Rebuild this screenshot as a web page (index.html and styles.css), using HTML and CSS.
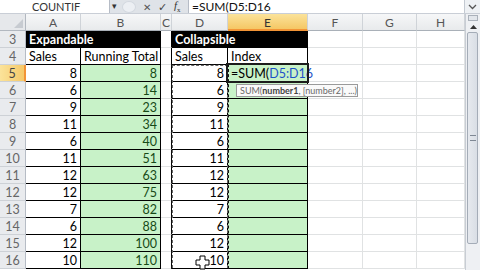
FILE: index.html
```html
<!DOCTYPE html>
<html>
    <head>
        <title>Running Total</title>
        <link rel="stylesheet" href="styles.css">
    </head>
    <body>
        <div class="excel">
            <div class="fbar">
                <div class="namebox">COUNTIF</div>
                <span class="nb-arrow">&#9662;</span>
                <div class="fbtns">
                    <span class="grip"></span>
                    <span class="fb-x">&#10005;</span>
                    <span class="fb-ok">&#10003;</span>
                    <span class="fb-fx"><i>f</i><sub>x</sub></span>
                </div>
                <div class="finput">=SUM(D5:D16</div>
                <div class="fexpand">
                    <svg width="9" height="6" viewBox="0 0 9 6"><path d="M1 1l3.5 3.5L8 1" fill="none" stroke="#555" stroke-width="1.3"/></svg>
                </div>
            </div>

            <div class="main">
                <div class="sheet">
                    <div class="grid">
                        <!-- column headers -->
                        <div class="corner"><span class="tri"></span></div>
                        <div class="ch">A</div>
                        <div class="ch">B</div>
                        <div class="ch">C</div>
                        <div class="ch">D</div>
                        <div class="ch sel">E</div>
                        <div class="ch">F</div>
                        <div class="ch">G</div>
                        <div class="ch">H</div>

                        <!-- row 3 -->
                        <div class="rh">3</div>
                        <div class="c hd span2">Expandable</div>
                        <div class="c cc"></div>
                        <div class="c hd span2">Collapsible</div>
                        <div class="c"></div><div class="c"></div><div class="c"></div>

                        <!-- row 4 -->
                        <div class="rh">4</div>
                        <div class="c t">Sales</div>
                        <div class="c t">Running Total</div>
                        <div class="c cc"></div>
                        <div class="c t">Sales</div>
                        <div class="c t">Index</div>
                        <div class="c"></div><div class="c"></div><div class="c"></div>

                        <!-- row 5 -->
                        <div class="rh sel">5</div>
                        <div class="c t n">8</div>
                        <div class="c t n g">8</div>
                        <div class="c cc"></div>
                        <div class="c t n">8</div>
                        <div class="c t g edit">=SUM(<span class="ref">D5:D16</span></div>
                        <div class="c"></div><div class="c"></div><div class="c"></div>

                        <!-- row 6 -->
                        <div class="rh">6</div>
                        <div class="c t n">6</div>
                        <div class="c t n g">14</div>
                        <div class="c cc"></div>
                        <div class="c t n">6</div>
                        <div class="c t g"></div>
                        <div class="c"></div><div class="c"></div><div class="c"></div>

                        <!-- row 7 -->
                        <div class="rh">7</div>
                        <div class="c t n">9</div>
                        <div class="c t n g">23</div>
                        <div class="c cc"></div>
                        <div class="c t n">9</div>
                        <div class="c t g"></div>
                        <div class="c"></div><div class="c"></div><div class="c"></div>

                        <!-- row 8 -->
                        <div class="rh">8</div>
                        <div class="c t n">11</div>
                        <div class="c t n g">34</div>
                        <div class="c cc"></div>
                        <div class="c t n">11</div>
                        <div class="c t g"></div>
                        <div class="c"></div><div class="c"></div><div class="c"></div>

                        <!-- row 9 -->
                        <div class="rh">9</div>
                        <div class="c t n">6</div>
                        <div class="c t n g">40</div>
                        <div class="c cc"></div>
                        <div class="c t n">6</div>
                        <div class="c t g"></div>
                        <div class="c"></div><div class="c"></div><div class="c"></div>

                        <!-- row 10 -->
                        <div class="rh">10</div>
                        <div class="c t n">11</div>
                        <div class="c t n g">51</div>
                        <div class="c cc"></div>
                        <div class="c t n">11</div>
                        <div class="c t g"></div>
                        <div class="c"></div><div class="c"></div><div class="c"></div>

                        <!-- row 11 -->
                        <div class="rh">11</div>
                        <div class="c t n">12</div>
                        <div class="c t n g">63</div>
                        <div class="c cc"></div>
                        <div class="c t n">12</div>
                        <div class="c t g"></div>
                        <div class="c"></div><div class="c"></div><div class="c"></div>

                        <!-- row 12 -->
                        <div class="rh">12</div>
                        <div class="c t n">12</div>
                        <div class="c t n g">75</div>
                        <div class="c cc"></div>
                        <div class="c t n">12</div>
                        <div class="c t g"></div>
                        <div class="c"></div><div class="c"></div><div class="c"></div>

                        <!-- row 13 -->
                        <div class="rh">13</div>
                        <div class="c t n">7</div>
                        <div class="c t n g">82</div>
                        <div class="c cc"></div>
                        <div class="c t n">7</div>
                        <div class="c t g"></div>
                        <div class="c"></div><div class="c"></div><div class="c"></div>

                        <!-- row 14 -->
                        <div class="rh">14</div>
                        <div class="c t n">6</div>
                        <div class="c t n g">88</div>
                        <div class="c cc"></div>
                        <div class="c t n">6</div>
                        <div class="c t g"></div>
                        <div class="c"></div><div class="c"></div><div class="c"></div>

                        <!-- row 15 -->
                        <div class="rh">15</div>
                        <div class="c t n">12</div>
                        <div class="c t n g">100</div>
                        <div class="c cc"></div>
                        <div class="c t n">12</div>
                        <div class="c t g"></div>
                        <div class="c"></div><div class="c"></div><div class="c"></div>

                        <!-- row 16 -->
                        <div class="rh">16</div>
                        <div class="c t n">10</div>
                        <div class="c t n g">110</div>
                        <div class="c cc"></div>
                        <div class="c t n">10</div>
                        <div class="c t g"></div>
                        <div class="c"></div><div class="c"></div><div class="c"></div>
                    </div>

                    <!-- overlays -->
                    <div class="ants"></div>
                    <div class="active"></div>
                    <div class="tip">SUM(<b>number1</b>, [number2], ...)</div>
                    <svg class="cursor" width="15" height="15" viewBox="0 0 15 15">
                        <path d="M5 1h5v4h4v5h-4v4H5v-4H1V5h4z" fill="#fff" stroke="#000" stroke-width="1"/>
                    </svg>
                </div>

                <div class="vscroll">
                    <div class="split"></div>
                    <div class="up"><svg width="7" height="4" viewBox="0 0 7 4"><path d="M0 4L3.5 0 7 4z" fill="#333"/></svg></div>
                    <div class="thumb"><span class="tgrip"></span></div>
                </div>
            </div>
        </div>
    </body>
</html>
```

FILE: styles.css
```css
body { margin: 0; font-family: Lato, "Liberation Sans", sans-serif; background: #fff; }
.excel { width: 480px; height: 270px; overflow: hidden; }

/* formula bar */
.fbar { display: flex; height: 14px; background: #dfe3e8; border-bottom: 1px solid #c9ced6; box-sizing: border-box; }
.namebox { width: 110px; background: #fff; border-right: 1px solid #b6bcc6; font-size: 11px; color: #333; line-height: 13px; padding-left: 32px; box-sizing: border-box; }
.nb-arrow { width: 9px; font-size: 9px; color: #333; line-height: 12px; text-align: center; }
.fbtns { width: 66px; display: flex; align-items: center; gap: 7px; padding-left: 3px; border-right: 1px solid #b6bcc6; }
.grip { width: 14px; height: 12px; border-radius: 50%; background: #eceff3; border: 1px solid #d3d8df; box-sizing: border-box; }
.fb-x { font-size: 10px; color: #555; }
.fb-ok { font-size: 11px; color: #444; }
.fb-fx { font-family: "Liberation Serif", serif; font-size: 11px; color: #333; }
.fb-fx sub { font-size: 7px; }
.finput { flex: 1; background: #fff; font-size: 12px; line-height: 13px; padding-left: 3px; color: #111; }
.fexpand { width: 15px; background: #eef1f4; border-left: 1px solid #c3c9d1; display: flex; align-items: center; justify-content: center; }

.main { display: flex; }
.sheet { position: relative; width: 465px; height: 256px; overflow: hidden; }

/* cell grid */
.grid { display: grid; grid-template-columns: 26px 55px 80px 11px 56px 80px 55px 54px 48px; grid-auto-rows: 17px; }
.grid > div { box-sizing: border-box; border-right: 1px solid #e0e2e3; border-bottom: 1px solid #e0e2e3; font-size: 12.5px; line-height: 17px; white-space: nowrap; overflow: hidden; }

.corner { background: #e6e8eb; border-color: #b2b8c0 !important; position: relative; }
.tri { position: absolute; right: 2px; bottom: 2px; border-left: 9px solid transparent; border-bottom: 9px solid #c7cbd1; }
.ch { background: linear-gradient(#f6f7f8, #e8eaec); color: #555; text-align: center; font-size: 12px !important; border-right-color: #cfd3d8 !important; border-bottom-color: #a9b0b8 !important; }
.ch.sel { background: linear-gradient(#fbe39a, #f5c765); color: #333; border-bottom: 2px solid #f29436 !important; }
.rh { background: #e9ebee; color: #666; text-align: center; font-size: 12.5px !important; border-right-color: #b6bcc5 !important; border-bottom-color: #cdd1d6 !important; }
.rh.sel { background: linear-gradient(90deg, #fbe39a, #f5c96a); color: #444; border-right: 2px solid #f29436 !important; }

.c { padding: 0 3px; color: #000; }
.span2 { grid-column: span 2; }
.hd { background: #000; color: #fff; font-weight: bold; border-color: #000 !important; }
.t { border-color: #000 !important; }
.cc { border-right-color: #000 !important; }
.n { text-align: right; }
.g { background: #c8f2c8; color: #174a17; }
.edit { color: #000; overflow: visible !important; }
.ref { color: #1d52c8; }

/* overlays */
.ants { position: absolute; left: 171px; top: 50px; width: 58px; height: 215px; border: 1px dashed #111; box-sizing: border-box; }
.ants::after { content: ""; position: absolute; inset: 0; border: 1px dashed #666; }
.active { position: absolute; left: 226px; top: 49px; width: 83px; height: 20px; border: 2px solid #1c1c1c; box-sizing: border-box; }
.tip { position: absolute; left: 236px; top: 70px; width: 122px; height: 13px; box-sizing: border-box; background: #fafafa; border: 1px solid #9a9a9a; font-size: 9px; line-height: 11px; color: #6a6a6a; padding-left: 3px; white-space: nowrap; }
.tip b { color: #444; }
.cursor { position: absolute; left: 195px; top: 241px; }

/* vertical scroll bar */
.vscroll { width: 15px; height: 256px; background: #eef0f3; border-left: 1px solid #c8cdd4; box-sizing: border-box; }
.split { height: 6px; margin: 1px 2px 0; border: 1px solid #aab1ba; background: #e2e6eb; box-sizing: border-box; }
.up { height: 11px; display: flex; align-items: center; justify-content: center; }
.thumb { height: 212px; margin: 0 0 0 1px; width: 11px; background: linear-gradient(90deg, #e6e9ee, #d9dee5); border: 1px solid #a4acb7; border-radius: 2px; box-sizing: border-box; display: flex; align-items: center; justify-content: center; }
.tgrip { width: 6px; height: 6px; border-top: 1px solid #7f8894; border-bottom: 1px solid #7f8894; box-sizing: border-box; }
```
